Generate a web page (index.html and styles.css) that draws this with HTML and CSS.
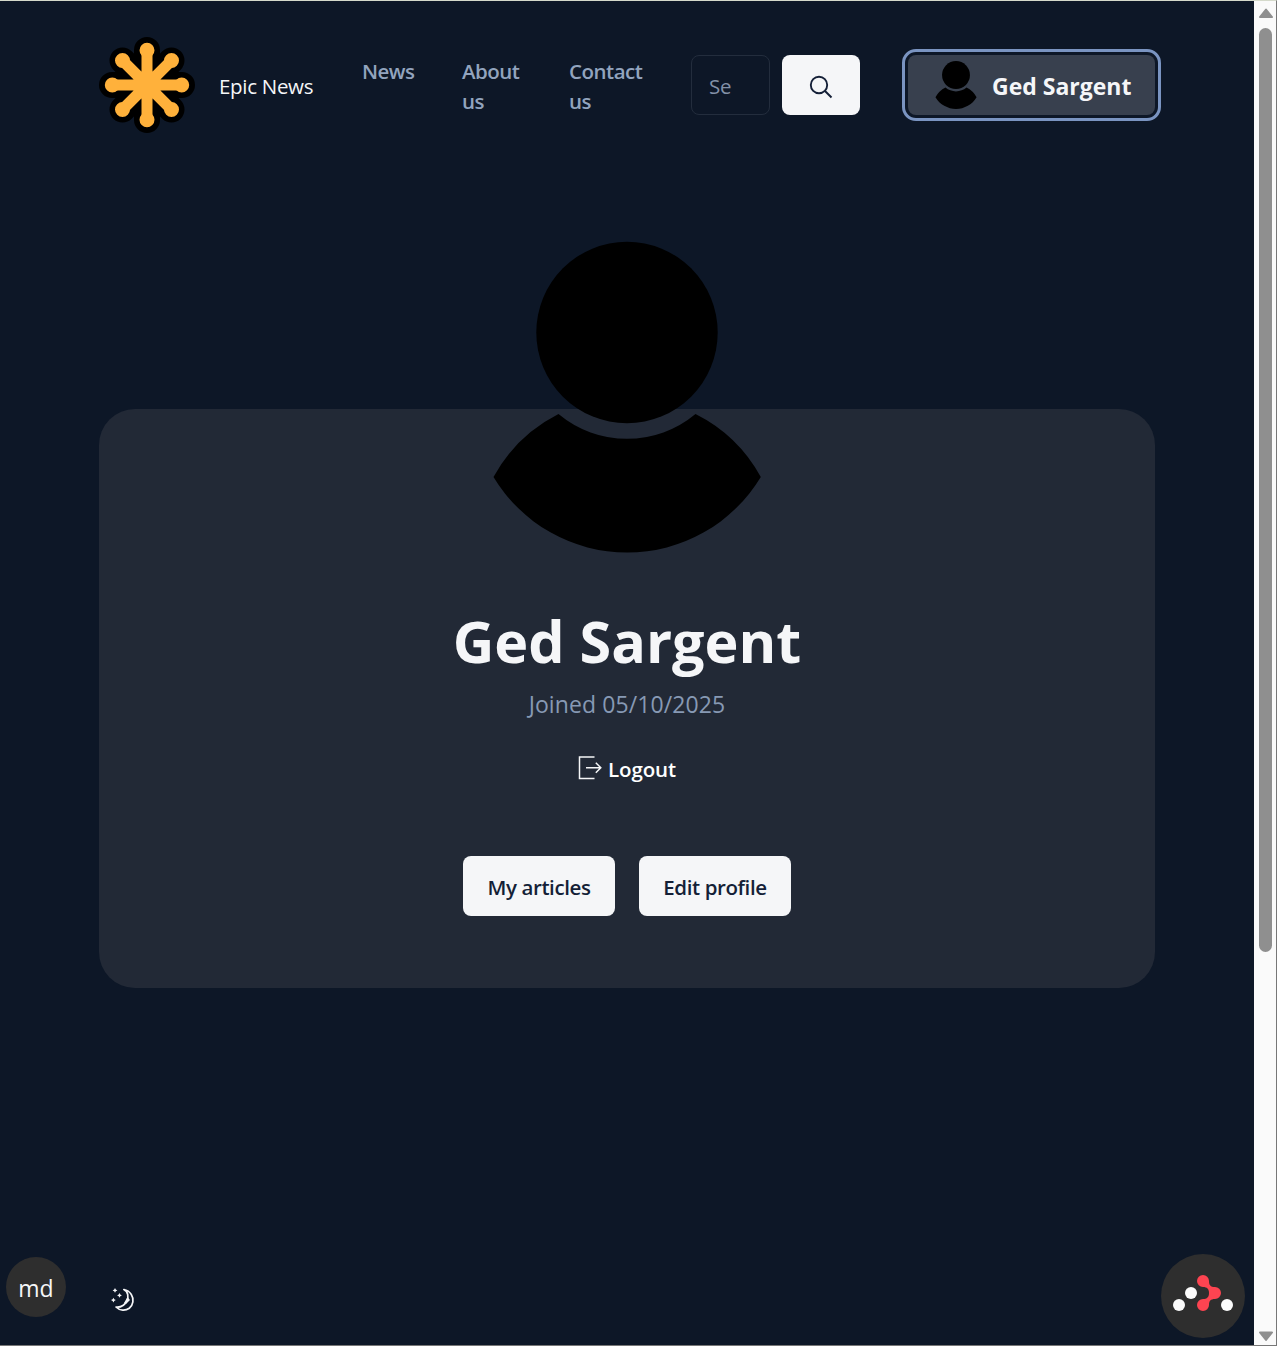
FILE: index.html
```html
<!DOCTYPE html>
<html lang="en">
<head>
<meta charset="utf-8">
<title>Epic News</title>
<link rel="stylesheet" href="styles.css">
</head>
<body>
<svg class="defs" width="0" height="0" aria-hidden="true">
  <symbol id="user" viewBox="0 0 312 312">
    <circle cx="156" cy="91.500" r="90.700"/>
    <path d="M22.500 236A152 152 0 0 1 87.500 173A106.800 106.800 0 0 0 224.500 173A152 152 0 0 1 289.800 236A156 156 0 0 1 22.500 236Z"/>
  </symbol>
</svg>
<div class="window">
  <div class="viewport">
    <header class="header">
      <a class="brand">
        <svg class="logo" viewBox="-48 -48 96 96">
          <path class="logo-outline" d="M0-35V35M-35 0H35M-24.500-24.500L24.500 24.500M24.500-24.500L-24.500 24.500"/>
          <path class="logo-arms" d="M0-35V35M-35 0H35M-24.500-24.500L24.500 24.500M24.500-24.500L-24.500 24.500"/>
          <path class="logo-tips" d="M0-34.700h0M0 34.700h0M-34.700 0h0M34.700 0h0M-24.500-24.500h0M24.500 24.500h0M24.500-24.500h0M-24.500 24.500h0"/>
        </svg>
        <span class="brand-name">Epic News</span>
      </a>
      <nav class="nav">
        <a class="nav-news">News</a>
        <a class="nav-about">About us</a>
        <a class="nav-contact">Contact us</a>
      </nav>
      <form class="search">
        <div class="search-field"><span>Se</span></div>
        <button class="btn search-btn" type="button" aria-label="Search">
          <svg width="24" height="24" viewBox="0 0 24 24"><circle cx="10" cy="10" r="8.200"/><path d="M16 16l6.500 6.500"/></svg>
        </button>
      </form>
      <a class="account">
        <svg width="48" height="48"><use href="#user"/></svg>
        <span>Ged Sargent</span>
      </a>
    </header>
    <main class="profile">
      <svg class="avatar" width="312" height="312"><use href="#user"/></svg>
      <h1>Ged Sargent</h1>
      <p class="joined">Joined 05/10/2025</p>
      <a class="logout">
        <svg width="24" height="24" viewBox="0 0 24 24"><path d="M16.500 1H1.500V22.500H16.500M8 11.700H22.800M17.800 6.700L22.800 11.700L17.800 16.700"/></svg>
        <span>Logout</span>
      </a>
      <div class="actions">
        <a class="btn articles">My articles</a>
        <a class="btn edit">Edit profile</a>
      </div>
    </main>
    <footer class="footer">
      <span class="breakpoint">md</span>
      <svg class="moon" width="24" height="24" viewBox="0 0 24 24">
        <path class="crescent" d="M12.800 1.500C17.300 3.500 17.800 9 15.800 13C13.800 17 10 19.500 5 19C9 23 14.500 23 18.300 20.200C22.300 17.200 23.200 11 20.300 6.500C18.500 3.500 15.800 2 12.800 1.500Z"/>
        <path class="stars" d="M4 0l.8 1.600 1.600.8-1.600.8-.8 1.600-.8-1.600-1.600-.8 1.600-.8zM8.500 5l.8 1.600 1.600.8-1.600.8-.8 1.600-.8-1.600-1.600-.8 1.600-.8zM2.400 9.700l.8 1.600 1.600.8-1.600.8-.8 1.600-.8-1.600-1.600-.8 1.600-.8zM16.500 9l2.500 3-4 4-2-1z"/>
      </svg>
      <svg class="devtools" width="84" height="84" viewBox="0 0 84 84">
        <circle cx="42" cy="42" r="42" fill="#2e2e2e"/>
        <g fill="#fbfbfb"><circle cx="18" cy="51" r="6"/><circle cx="30" cy="39" r="6"/><circle cx="66" cy="51" r="6"/></g>
        <path fill="#fd4451" d="M42 21a6 6 0 0 1 6 6c0 4 1.500 6 6 6a6 6 0 0 1 0 12c-4.500 0-6 2-6 6a6 6 0 1 1-6-6c4 0 6-2 6-6s-2-6-6-6a6 6 0 0 1 0-12z"/>
      </svg>
    </footer>
  </div>
  <div class="scrollbar">
    <svg width="16" height="12" viewBox="0 0 16 12"><path d="M8 2.500L14 10H2Z"/></svg>
    <div class="track"><div class="thumb"></div></div>
    <svg width="16" height="12" viewBox="0 0 16 12"><path d="M8 10L14 2.500H2Z"/></svg>
  </div>
</div>
</body>
</html>
```
FILE: styles.css
```css
* { box-sizing: border-box; }
body {
  margin: 0;
  font-family: "Open Sans", "Noto Sans", sans-serif;
  font-size: 20.5px;
  letter-spacing: -.3px;
  line-height: 30px;
  color: #f5f6f8;
}
.defs { display: block; }
.window {
  display: flex;
  height: 1346px;
  overflow: hidden;
  border: solid #777;
  border-width: 1px 1px 1px 0;
  border-top-color: #d5dacb;
}
.viewport {
  width: 1254px;
  flex: none;
  display: flex;
  flex-direction: column;
  background: #0d1727;
}
.header {
  display: flex;
  align-items: center;
  padding: 36px 99px 0;
  height: 132px;
  white-space: nowrap;
}
.brand { display: flex; align-items: center; gap: 24px; width: 263px; flex: none; }
.brand-name { padding-top: 1px; }
.logo { width: 96px; height: 96px; fill: none; stroke-linecap: round; }
.logo-outline { stroke: #000; stroke-width: 26px; }
.logo-arms { stroke: #ffb13b; stroke-width: 11px; }
.logo-tips { stroke: #ffb13b; stroke-width: 15px; }
.nav {
  display: flex;
  gap: 48px;
  width: 329px;
  flex: none;
  padding-top: 2px;
  color: #92a4be;
  font-weight: 600;
  letter-spacing: -.5px;
}
.nav a { white-space: normal; flex: none; }
.nav-news { width: 52px; }
.nav-about { width: 59px; }
.nav-contact { width: 74px; }
.search { display: flex; gap: 12px; width: 217px; flex: none; }
.search-field {
  width: 79px;
  height: 60px;
  padding: 15px 17px 0;
  border: 1px solid #232d3d;
  border-radius: 8px;
  color: #8391a7;
}
.btn {
  height: 60px;
  border: 0;
  border-radius: 8px;
  background: #f5f6f8;
  color: #141f37;
  display: flex;
  align-items: center;
  justify-content: center;
}
.search-btn { width: 78px; padding: 4px 0 0; }
.search-btn svg { fill: none; stroke: #141f37; stroke-width: 1.9; }
.account {
  display: flex;
  align-items: center;
  gap: 12px;
  width: 247px;
  height: 60px;
  padding: 0 24px;
  border-radius: 8px;
  background: #38404e;
  outline: 3px solid #7a94c1;
  outline-offset: 3px;
  font-weight: 700;
  font-size: 23px;
  letter-spacing: 0;
}
.account svg { flex: none; }
.account span { padding-top: 2px; }
.profile {
  width: 1056px;
  height: 579px;
  margin: 276px auto 0;
  border-radius: 36px;
  background: #222936;
  display: flex;
  flex-direction: column;
  align-items: center;
}
.avatar { margin-top: -168px; flex: none; }
h1 {
  margin: 52px 0 0;
  font-size: 57.5px;
  letter-spacing: 0;
  line-height: 72px;
  font-weight: 700;
  white-space: nowrap;
}
.joined { margin: 12px 0 0; font-size: 23px; letter-spacing: .1px; color: #8799b4; }
.logout { display: flex; align-items: flex-start; gap: 6px; margin-top: 35px; font-weight: 600; letter-spacing: -.1px; color: #fff; }
.logout svg { margin-top: 2px; fill: none; stroke: #f5f6f8; stroke-width: 1.5; }
.actions { display: flex; gap: 24px; margin-top: 72px; }
.actions .btn { width: 152px; padding-top: 1px; font-weight: 600; letter-spacing: -.4px; white-space: nowrap; }
.footer {
  margin-top: auto;
  height: 91px;
  display: flex;
  padding: 0 9px 0 6px;
  flex: none;
}
.breakpoint {
  width: 60px;
  height: 60px;
  margin-top: 3px;
  border-radius: 50%;
  background: #2e2e2e;
  font-size: 23px;
  letter-spacing: 0;
  line-height: 63px;
  text-align: center;
}
.moon { margin: 34px 0 0 45px; }
.crescent { fill: none; stroke: #f5f6f8; stroke-width: 1.7; stroke-linejoin: round; }
.stars { fill: #f5f6f8; }
.devtools { margin-left: auto; }
.scrollbar {
  flex: 1;
  display: flex;
  flex-direction: column;
  align-items: center;
  padding: 6px 0 3px 1px;
  background: #fafafa;
}
.scrollbar path { fill: #8f8f8f; stroke: #8f8f8f; stroke-width: 2; stroke-linejoin: round; }
.track { flex: 1; padding-top: 9px; }
.thumb { width: 13px; height: 924px; border-radius: 7px; background: #8f8f8f; }
```
